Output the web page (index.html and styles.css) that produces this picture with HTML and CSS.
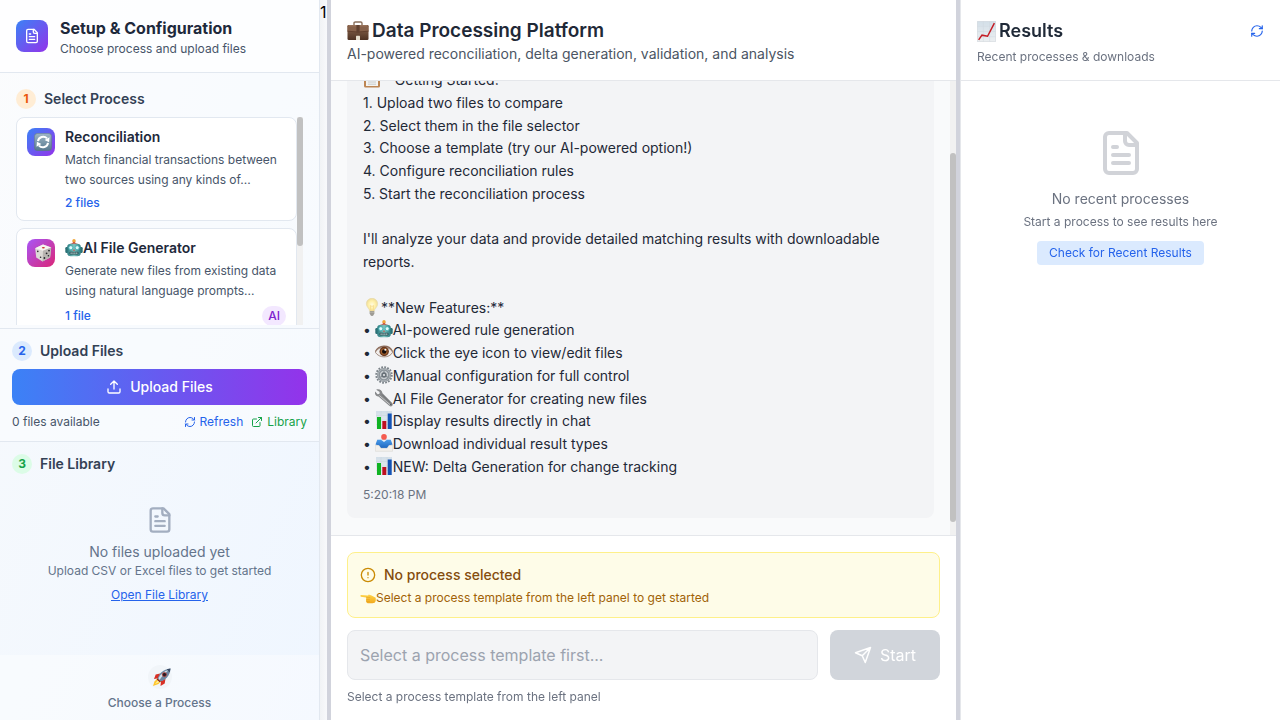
FILE: index.html
```html
<!DOCTYPE html>
<html lang="en">
<head>
<meta charset="utf-8">
<meta name="viewport" content="width=device-width, initial-scale=1">
<title>Data Processing Platform</title>
<link rel="stylesheet" href="styles.css">
</head>
<body>
<svg class="sprite" aria-hidden="true">
  <defs>
    <linearGradient id="g-sync" x1="0" y1="0" x2="0" y2="1"><stop offset="0" stop-color="#9fb6c6"/><stop offset="1" stop-color="#56788f"/></linearGradient>
    <linearGradient id="g-case" x1="0" y1="0" x2="0" y2="1"><stop offset="0" stop-color="#8f6a50"/><stop offset="1" stop-color="#4e3223"/></linearGradient>
    <linearGradient id="g-paper" x1="0" y1="0" x2="0" y2="1"><stop offset="0" stop-color="#d3dfe8"/><stop offset="1" stop-color="#eceff1"/></linearGradient>
    <linearGradient id="g-teal" x1="0" y1="0" x2="1" y2="0"><stop offset="0" stop-color="#2c7b80"/><stop offset=".5" stop-color="#7cc4bf"/><stop offset="1" stop-color="#2c7b80"/></linearGradient>
    <linearGradient id="g-hand" x1="0" y1="0" x2="0" y2="1"><stop offset="0" stop-color="#ffd54a"/><stop offset="1" stop-color="#f2a81d"/></linearGradient>
    <radialGradient id="g-bulb"><stop offset="0" stop-color="#fffbe0"/><stop offset=".6" stop-color="#fff0a8"/><stop offset="1" stop-color="#eddb9a"/></radialGradient>
    <linearGradient id="g-tray" x1="0" y1="0" x2="0" y2="1"><stop offset="0" stop-color="#4a9bea"/><stop offset="1" stop-color="#1d65bd"/></linearGradient>
  </defs>

  <symbol id="file-text" viewBox="0 0 24 24"><path d="M15 2H6a2 2 0 0 0-2 2v16a2 2 0 0 0 2 2h12a2 2 0 0 0 2-2V7Z"/><path d="M14 2v4a2 2 0 0 0 2 2h4"/><path d="M10 9H8M16 13H8M16 17H8"/></symbol>
  <symbol id="upload" viewBox="0 0 24 24"><path d="M21 15v4a2 2 0 0 1-2 2H5a2 2 0 0 1-2-2v-4M17 8l-5-5-5 5M12 3v12"/></symbol>
  <symbol id="refresh" viewBox="0 0 24 24"><path d="M3 12a9 9 0 0 1 9-9 9.75 9.75 0 0 1 6.74 2.74L21 8"/><path d="M21 3v5h-5"/><path d="M21 12a9 9 0 0 1-9 9 9.75 9.75 0 0 1-6.74-2.74L3 16"/><path d="M8 16H3v5"/></symbol>
  <symbol id="external" viewBox="0 0 24 24"><path d="M15 3h6v6M10 14 21 3M18 13v6a2 2 0 0 1-2 2H5a2 2 0 0 1-2-2V8a2 2 0 0 1 2-2h6"/></symbol>
  <symbol id="alert" viewBox="0 0 24 24"><circle cx="12" cy="12" r="10"/><path d="M12 8v4M12 16h.01"/></symbol>
  <symbol id="send" viewBox="0 0 24 24"><path d="m22 2-7 20-4-9-9-4ZM22 2 11 13"/></symbol>

  <symbol id="e-sync" viewBox="0 0 18 18"><rect x=".3" y=".3" width="17.4" height="17.4" rx="3.5" fill="url(#g-sync)" stroke="#5d7788" stroke-width=".6"/><path d="M4 8.2A5.2 5.2 0 0 1 13 5.4M14 9.8A5.2 5.2 0 0 1 5 12.6" fill="none" stroke="#fff" stroke-width="2"/><path d="m15.5 4.2-.4 5-4.5-2.3ZM2.5 13.8l.4-5 4.5 2.3Z" fill="#fff"/></symbol>
  <symbol id="e-dice" viewBox="0 0 18 18"><path d="M1.2 4.2 9 .6l8.2 3-1.1 9.8L8.5 17.6 2.2 13.4Z" fill="#dcd9d6"/><path d="M1.2 4.2 9 .6l8.2 3L9 6.8Z" fill="#f6f4f1"/><path d="m9 6.8 8.2-3.2-1.1 9.8L8.5 17.6Z" fill="#b8b4b1"/><ellipse cx="9.4" cy="3.7" rx="1.5" ry=".8" fill="#c8322d"/><g fill="#27272b"><circle cx="3.8" cy="7.4" r=".8"/><circle cx="6.6" cy="13.3" r=".8"/><circle cx="15" cy="6.6" r=".9"/><circle cx="12.6" cy="9.3" r=".9"/><circle cx="10.4" cy="14" r=".9"/><circle cx="14.4" cy="11.8" r=".8"/></g></symbol>
  <symbol id="e-robot" viewBox="0 0 18 18"><path d="M9 2v3" stroke="#c73b39" stroke-width="2.4"/><circle cx="9" cy="1.8" r="1.7" fill="#f0a63a"/><path d="M5 5.5C6 3.5 12 3.5 13 5.5Z" fill="#c95048"/><rect x=".3" y="8" width="3" height="6" rx="1.2" fill="#2c7075"/><rect x="14.7" y="8" width="3" height="6" rx="1.2" fill="#2c7075"/><path d="M2.2 8Q2.2 4.8 6 4.8h6q3.8 0 3.8 3.2v6q0 3.2-3.5 3.2H5.7q-3.5 0-3.5-3.2Z" fill="url(#g-teal)"/><circle cx="5.8" cy="8.7" r="2" fill="#dffafa" stroke="#3eb1b8" stroke-width=".8"/><circle cx="12.2" cy="8.7" r="2" fill="#dffafa" stroke="#3eb1b8" stroke-width=".8"/><path d="m9 10-1 1.8h2Z" fill="#c94a43"/><rect x="4.5" y="12.8" width="9" height="2.6" rx="1" fill="#24484d"/><path d="M5.5 14.1h7" stroke="#d8f2ef" stroke-width="1.2" stroke-dasharray="1.2 .7"/></symbol>
  <symbol id="e-rocket" viewBox="0 0 18 18"><path d="M4.2 10.5 1.5 13.5 0 18l5.5-2 3-3Z" fill="#ffc52b"/><path d="M5 12 2 16l4.5-2Z" fill="#fff099"/><path d="m7.2 5.5-4.5 1L1 11l4.5-.8ZM12.5 10.8l-.8 4.7L7.5 18l.5-5Z" fill="#d82e24"/><path d="M4.7 10.5C6 5.5 10 1.2 17.5.5 17 8 12.5 12 7.5 13.5Z" fill="#6c87a3"/><path d="M5.5 10C7.5 6 11 3 16 2 12 5 9 8 6.5 12Z" fill="#d4e0ea"/><path d="M13.7 1.3 17.5.5l-.8 4Z" fill="#394a64"/><circle cx="11.4" cy="6.6" r="2.1" fill="#281b26" stroke="#c94338" stroke-width=".7"/><path d="m4.3 10.2 3.7 3.5-1.6.4-2.6-2.7Z" fill="#7f2029"/></symbol>
  <symbol id="e-case" viewBox="0 0 22 20"><path d="M7 4V2.2Q7 1 8.3 1h5.4Q15 1 15 2.2V4" fill="none" stroke="#8a705c" stroke-width="1.4"/><rect x=".5" y="4" width="21" height="15" rx="1.2" fill="url(#g-case)"/><path d="M.5 5.2q0-1.2 1.2-1.2h18.6q1.2 0 1.2 1.2v5q-10.5 1.6-21 0Z" fill="#86614a"/><path d="M.5 10.2q10.5 1.6 21 0" fill="none" stroke="#5a3a29" stroke-width=".8"/><path d="M2 4.8h18" stroke="#a98368" stroke-width=".7"/><path d="M9.4 4h3.2v7.5H9.4Z" fill="#60402f"/><rect x="9" y="14.8" width="4" height="4.2" rx=".5" fill="#e7dfce"/></symbol>
  <symbol id="e-clipboard" viewBox="0 0 18 18"><rect x="1" y="2" width="16" height="15.5" rx="1.5" fill="#bd8654"/><path d="M3 4h12v12H3Z" fill="#f4f4f2"/><path d="M5 7h8M5 9.5h8M5 12h8M5 14.2h8" stroke="#bdc1c5" stroke-width=".8"/><rect x="6" y=".5" width="6" height="4" rx="1" fill="#8e9499"/></symbol>
  <symbol id="e-bulb" viewBox="0 0 18 18"><path d="M9 .3C5.4.3 3.3 2.8 3.3 5.8c0 3.3 3 4.6 3.4 7.5h4.6c.4-2.9 3.4-4.2 3.4-7.5C14.7 2.8 12.6.3 9 .3Z" fill="url(#g-bulb)" stroke="#e4d9ad" stroke-width=".5"/><path d="M8 13 7.3 7.5 9 8.5l1.7-1L10 13" fill="none" stroke="#f3d27c" stroke-width=".6"/><path d="M6.7 13.2h4.6v2.5L10 17.8H8l-1.3-2.1Z" fill="#8d8b84"/><path d="M6.7 14.5h4.6M7 16h4" stroke="#d0cdc5" stroke-width=".5"/></symbol>
  <symbol id="e-eye" viewBox="0 0 18 18"><path d="M.5 9C3.5 2 14 1 17.5 9" fill="none" stroke="#8c6b59" stroke-width="1.8"/><path d="M.3 9.2C4 2.5 14 2.5 17.7 9.2 14.5 15.5 4 15.5.3 9.2Z" fill="#f1eeec" stroke="#9c8478" stroke-width=".9"/><circle cx="9.2" cy="8.5" r="4.7" fill="#6b3a20"/><circle cx="9.2" cy="8.5" r="3.3" fill="#a3622e"/><circle cx="9.2" cy="8.5" r="2.2" fill="#150d0b"/><circle cx="10.3" cy="6.8" r="1" fill="#fff"/></symbol>
  <symbol id="e-gear" viewBox="0 0 18 18"><circle cx="9" cy="9" r="7.8" fill="none" stroke="#7b8389" stroke-width="1.8" stroke-dasharray="1.8 1.265"/><circle cx="9" cy="9" r="5.6" fill="#c9ced1" stroke="#8b9399" stroke-width="2.9"/><circle cx="9" cy="9" r="5.9" fill="none" stroke="#b4babe" stroke-width=".8"/><path d="M9 9V4.5M9 9l4 2.5M9 9l-4 2.5" stroke="#8d959a" stroke-width="1.3"/><circle cx="9" cy="9" r="2.7" fill="#687178"/><circle cx="9" cy="9" r="1.1" fill="#e3e5e7"/></symbol>
  <symbol id="e-wrench" viewBox="0 0 18 18"><path d="M1.2.7 4.7 3.1l-.4 1.8-1.8.3L.2 2.4C-.8 5 .8 7.4 3.5 7.6l10.8 9.2c2.2 1.8 4.6-.7 2.9-2.7L7.5 4.2C7 1.4 4.3-.4 1.2.7Z" fill="#87898b"/><path d="m4.3 6.5 11 9.4" stroke="#c7c8c8" stroke-width="1"/><path d="m7 5.5 9 9" stroke="#626467" stroke-width=".7"/><circle cx="15.8" cy="15.5" r=".8" fill="#55585b"/></symbol>
  <symbol id="e-bars" viewBox="0 0 18 18"><path d="M1 0h16v18H1Z" fill="url(#g-paper)"/><path d="M1 4.5h16M1 9h16M1 13.5h16M6 0v18M12 0v18" stroke="#c5d1da" stroke-width=".4"/><path d="M2 6h4v12H2Z" fill="#10b322"/><path d="M7.3 10h4v8h-4Z" fill="#bd1020"/><path d="M12.7 2.5h4V18h-4Z" fill="#1553b5"/></symbol>
  <symbol id="e-inbox" viewBox="0 0 18 18"><path d="M2 5.5h14l1.8 6v5q0 1-1 1H1.2q-1 0-1-1v-5Z" fill="#e6e7e8"/><path d="M2.3 5.8h13.4l1.8 4.7-3.5 1-1.8 2.8H5.8L4 11.5l-3.5-1Z" fill="url(#g-tray)"/><path d="M.3 11.5H4l1.8 2.8h6.4l1.8-2.8h3.7v5.7H.3Z" fill="#f2f0ed" stroke="#d7d4d0" stroke-width=".5"/><path d="M6 5.8h6L9 8Z" fill="#e9f0f7"/><circle cx="9" cy="2.9" r="2.8" fill="#f45b50"/></symbol>
  <symbol id="e-hand" viewBox="0 0 18 18"><path d="M.8 5.5Q0 7 1 7.5l6 .8-.2 3.7Q7 15 10 15h4q3 0 3.7-2.5V8.7L13 6.2 9.8 5 9 6.2Z" fill="url(#g-hand)"/><path d="M7 8.3h4.5M7 10.6h4M7.2 12.8H11" stroke="#dd9a22" stroke-width=".6"/></symbol>
  <symbol id="e-chart" viewBox="0 0 18 20"><path d="M.3.3h17.4v19.4H.3Z" fill="url(#g-paper)" stroke="#c5ced5" stroke-width=".5"/><path d="M.5 5h17M.5 10h17M.5 15h17M6 .5v19M12 .5v19" stroke="#ccd6de" stroke-width=".4"/><path d="m1.5 18 3.2-4.5 5.3 1L16.5 2" fill="none" stroke="#c51c24" stroke-width="1.4"/></symbol>
</svg>

<div class="app">
  <aside class="setup">
    <header class="setup-head">
      <span class="logo"><svg class="icon i16"><use href="#file-text"/></svg></span>
      <div>
        <h1 class="setup-title">Setup &amp; Configuration</h1>
        <p class="setup-sub">Choose process and upload files</p>
      </div>
    </header>

    <section class="step step-process">
      <h2 class="step-title"><span class="num orange">1</span>Select Process</h2>
      <div class="process-area">
        <div class="process-list">
          <button class="card" type="button">
            <span class="tile blue"><svg class="emoji"><use href="#e-sync"/></svg></span>
            <span class="card-body">
              <span class="card-title">Reconciliation</span>
              <span class="card-desc">Match financial transactions between two sources using any kinds of...</span>
              <span class="card-meta">2 files</span>
            </span>
          </button>
          <button class="card" type="button">
            <span class="tile pink"><svg class="emoji"><use href="#e-dice"/></svg></span>
            <span class="card-body">
              <span class="card-title"><svg class="emoji"><use href="#e-robot"/></svg>AI File Generator</span>
              <span class="card-desc">Generate new files from existing data using natural language prompts...</span>
              <span class="card-meta tagged">1 file <span class="tag">AI</span></span>
            </span>
          </button>
        </div>
        <div class="track process-track"><span class="thumb"></span></div>
      </div>
    </section>

    <section class="step step-upload">
      <h2 class="step-title"><span class="num sky">2</span>Upload Files</h2>
      <button class="upload" type="button"><svg class="icon i16"><use href="#upload"/></svg>Upload Files</button>
      <div class="upload-row">
        <span>0 files available</span>
        <span class="upload-links">
          <button class="mini blue-text" type="button"><svg class="icon i12"><use href="#refresh"/></svg>Refresh</button>
          <button class="mini green-text" type="button"><svg class="icon i12"><use href="#external"/></svg>Library</button>
        </span>
      </div>
    </section>

    <section class="step step-library">
      <h2 class="step-title"><span class="num green">3</span>File Library</h2>
      <div class="empty">
        <svg class="icon i28 muted"><use href="#file-text"/></svg>
        <p class="empty-title">No files uploaded yet</p>
        <p class="empty-sub">Upload CSV or Excel files to get started</p>
        <button class="mini underline blue-text" type="button">Open File Library</button>
      </div>
    </section>

    <footer class="setup-foot">
      <span class="rocket"><svg class="emoji"><use href="#e-rocket"/></svg></span>
      <p>Choose a Process</p>
    </footer>
  </aside>
  <span class="stray">1</span>
  <div class="divider"></div>

  <main class="chat">
    <header class="chat-head">
      <h1 class="chat-title"><svg class="emoji case"><use href="#e-case"/></svg>Data Processing Platform</h1>
      <p class="chat-sub">AI-powered reconciliation, delta generation, validation, and analysis</p>
    </header>
    <div class="chat-body">
      <div class="messages" id="messages">
        <article class="bubble">
          <p class="line"><svg class="emoji"><use href="#e-clipboard"/></svg>**Getting Started:**</p>
          <p class="line">1. Upload two files to compare</p>
          <p class="line">2. Select them in the file selector</p>
          <p class="line">3. Choose a template (try our AI-powered option!)</p>
          <p class="line">4. Configure reconciliation rules</p>
          <p class="line">5. Start the reconciliation process</p>
          <br>
          <p class="line">I'll analyze your data and provide detailed matching results with downloadable reports.</p>
          <br>
          <p class="line"><svg class="emoji"><use href="#e-bulb"/></svg>**New Features:**</p>
          <p class="line">• <svg class="emoji"><use href="#e-robot"/></svg>AI-powered rule generation</p>
          <p class="line">• <svg class="emoji"><use href="#e-eye"/></svg>Click the eye icon to view/edit files</p>
          <p class="line">• <svg class="emoji"><use href="#e-gear"/></svg>Manual configuration for full control</p>
          <p class="line">• <svg class="emoji"><use href="#e-wrench"/></svg>AI File Generator for creating new files</p>
          <p class="line">• <svg class="emoji"><use href="#e-bars"/></svg>Display results directly in chat</p>
          <p class="line">• <svg class="emoji"><use href="#e-inbox"/></svg>Download individual result types</p>
          <p class="line">• <svg class="emoji"><use href="#e-bars"/></svg>NEW: Delta Generation for change tracking</p>
          <time class="stamp">5:20:18 PM</time>
        </article>
      </div>
      <div class="track chat-track"><span class="thumb"></span></div>
    </div>
    <form class="composer">
      <div class="alert" role="status">
        <p class="alert-title"><svg class="icon i16 amber"><use href="#alert"/></svg>No process selected</p>
        <p class="alert-text"><svg class="emoji small"><use href="#e-hand"/></svg>Select a process template from the left panel to get started</p>
      </div>
      <div class="entry">
        <input class="field" type="text" id="prompt" aria-label="Message" aria-describedby="hint" placeholder="Select a process template first..." disabled>
        <button class="start" type="submit" disabled><svg class="icon i18"><use href="#send"/></svg>Start</button>
      </div>
      <p class="hint" id="hint">Select a process template from the left panel</p>
    </form>
  </main>
  <div class="divider"></div>

  <aside class="results">
    <header class="results-head">
      <div class="results-bar">
        <h2 class="results-title"><svg class="emoji chart"><use href="#e-chart"/></svg>Results</h2>
        <button class="mini blue-text" type="button" aria-label="Refresh results"><svg class="icon i14"><use href="#refresh"/></svg></button>
      </div>
      <p class="results-sub">Recent processes &amp; downloads</p>
    </header>
    <div class="results-empty">
      <svg class="icon i48 pale"><use href="#file-text"/></svg>
      <p class="results-none">No recent processes</p>
      <p class="results-note">Start a process to see results here</p>
      <button class="check" type="button">Check for Recent Results</button>
    </div>
  </aside>
</div>
<script src="app.js"></script>
</body>
</html>
```

FILE: app.js
```js
// Keep the latest message in view, leaving the list's bottom spacing below the fold.
const messages = document.getElementById('messages');
messages.scrollTop = messages.scrollHeight - messages.clientHeight - 16;
```

FILE: styles.css
```css
* { box-sizing: border-box; margin: 0; padding: 0; }
body { font-family: Inter, "Liberation Sans", sans-serif; font-size: 16px; line-height: 24px; color: #000; }
button, input { font: inherit; color: inherit; border: 0; background: none; }
button { cursor: pointer; }
.sprite { position: absolute; width: 0; height: 0; }

.icon { flex: none; display: block; fill: none; stroke: currentColor; stroke-width: 2; stroke-linecap: round; stroke-linejoin: round; }
.i12 { width: 12px; height: 12px; }
.i14 { width: 14px; height: 14px; }
.i16 { width: 16px; height: 16px; }
.i18 { width: 18px; height: 18px; }
.i28 { width: 28px; height: 28px; }
.i48 { width: 48px; height: 48px; }
.emoji { flex: none; width: 18px; height: 18px; vertical-align: -3px; }
.emoji.small { width: 16px; height: 16px; }
.emoji.case { width: 22px; height: 20px; margin-right: 3px; }
.emoji.chart { width: 19px; height: 21px; margin-right: 3px; }
.muted { color: #a3aec0; }
.pale { color: #d1d3d8; }
.amber { color: #ca8a04; }
.blue-text { color: #2563eb; }
.green-text { color: #16a34a; }

.app { display: flex; height: 100vh; overflow: hidden; background: #f9fafb; }
.divider { flex: none; width: 4px; background: #d1d3dc; cursor: col-resize; }
.stray { flex: none; width: 7px; background: linear-gradient(to right, #f1f3f5, #f8f9fb); }

/* Slim scroll bars beside the scrolling lists */
.track { flex: none; display: flex; flex-direction: column; width: 6px; background: #f1f1f1; }
.thumb { border-radius: 3px; background: #c1c1c1; }
.process-track .thumb { flex: 0 0 62%; }
.chat-track::before { content: ""; flex: 72; }
.chat-track .thumb { flex: 369; }
.chat-track::after { content: ""; flex: 13; }

/* Setup panel */
.setup { flex: none; width: 320px; display: flex; flex-direction: column; border-right: 1px solid #e2e8f0; background: linear-gradient(to bottom right, #f8fafc, #eff6ff); }
.setup-head { display: flex; align-items: flex-start; gap: 12px; padding: 16px 16px 14px; border-bottom: 1px solid #e2e8f0; background: rgba(255, 255, 255, .8); }
.logo { display: grid; place-items: center; width: 32px; height: 32px; margin-top: 4px; border-radius: 8px; color: #fff; background: linear-gradient(to bottom right, #3b82f6, #9333ea); }
.setup-title { font-size: 16px; line-height: 24px; font-weight: 700; color: #1e293b; }
.setup-sub { font-size: 12px; line-height: 18px; color: #475569; }

.step { border-bottom: 1px solid #e2e8f0; }
.step-process { padding: 16px 16px 3px; background: rgba(255, 255, 255, .4); }
.step-upload { padding: 12px 12px 10px; background: rgba(255, 255, 255, .4); }
.step-library { flex: 1; padding: 12px; border-bottom: 0; }
.step-title { display: flex; align-items: center; gap: 8px; margin-bottom: 8px; font-size: 14px; line-height: 20px; font-weight: 600; color: #334155; }
.num { display: grid; place-items: center; width: 20px; height: 20px; border-radius: 50%; font-size: 12px; font-weight: 700; }
.orange { background: #ffedd5; color: #ea580c; }
.sky { background: #dbeafe; color: #2563eb; }
.green { background: #dcfce7; color: #16a34a; }

.process-area { display: flex; height: 208px; }
.process-list { flex: 1; min-width: 0; display: flex; flex-direction: column; gap: 7px; overflow-y: auto; scrollbar-width: none; }
.card { flex: none; display: flex; align-items: flex-start; gap: 10px; width: 100%; padding: 10px 10px 9px; text-align: left; border: 1px solid #e2e8f0; border-radius: 8px; background: rgba(255, 255, 255, .9); }
.tile { flex: none; display: grid; place-items: center; width: 28px; height: 28px; padding-left: 3px; border-radius: 8px; }
.tile.blue { background: linear-gradient(to bottom right, #3b82f6, #9333ea); }
.tile.pink { background: linear-gradient(to bottom right, #a855f7, #db2777); }
.card-body { flex: 1; min-width: 0; display: flex; flex-direction: column; }
.card-title { display: flex; align-items: center; height: 18px; margin-bottom: 4px; font-size: 14px; line-height: 18px; font-weight: 600; color: #1e293b; }
.card-desc { margin-bottom: 6px; font-size: 12px; line-height: 1.625; color: #475569; }
.card-meta { display: flex; align-items: center; justify-content: space-between; height: 16px; font-size: 12px; line-height: 16px; font-weight: 500; color: #2563eb; }
.tagged { height: 20px; }
.tag { padding: 2px 6px; border-radius: 10px; background: #f3e8ff; color: #7e22ce; }

.upload { display: flex; align-items: center; justify-content: center; gap: 8px; width: 100%; height: 36px; border-radius: 8px; font-size: 14px; line-height: 20px; font-weight: 500; color: #fff; background: linear-gradient(to right, #3b82f6, #9333ea); }
.upload-row { display: flex; justify-content: space-between; margin-top: 8px; font-size: 12px; line-height: 18px; color: #475569; }
.upload-links { display: flex; gap: 8px; }
.mini { display: flex; align-items: center; gap: 4px; font-size: 12px; line-height: 18px; }
.underline { text-decoration: underline; }

.empty { display: flex; flex-direction: column; align-items: center; padding: 24px 0; color: #64748b; }
.empty-title { margin-top: 8px; font-size: 14px; line-height: 20px; }
.empty-sub { margin-bottom: 6px; font-size: 12px; line-height: 18px; }
.setup-foot { display: flex; flex-direction: column; align-items: center; gap: 6px; padding: 10px 12px 9px; font-size: 12px; line-height: 16px; font-weight: 500; color: #64748b; background: rgba(255, 255, 255, .4); }
.rocket { display: grid; place-items: center; width: 24px; height: 24px; padding-left: 4px; border-radius: 50%; background: #f1f5f9; }

/* Chat */
.chat { flex: 1; min-width: 0; display: flex; flex-direction: column; }
.chat-head { padding: 17px 16px; border-bottom: 1px solid #e5e7eb; background: #fff; }
.chat-title { display: flex; align-items: center; font-size: 19px; line-height: 28px; font-weight: 600; color: #1f2937; }
.chat-sub { font-size: 14px; line-height: 18px; color: #4b5563; }
.chat-body { flex: 1; min-height: 0; display: flex; }
.messages { flex: 1; min-width: 0; padding: 16px 16px 33px; overflow-y: auto; scrollbar-width: none; background: #f9fafb; }
.bubble { padding: 62px 16px 15px; border-radius: 8px; background: #f3f4f6; font-size: 14px; line-height: 1.625; color: #1f2937; }
.stamp { display: block; margin-top: 8px; font-size: 12px; line-height: 16px; color: #6b7280; }

.composer { padding: 16px 16px 14px; border-top: 1px solid #e5e7eb; background: #fff; }
.alert { padding: 12px 12px 10px; border: 1px solid #fef08a; border-radius: 8px; background: #fefce8; }
.alert-title { display: flex; align-items: center; gap: 8px; margin-bottom: 4px; font-size: 14px; line-height: 20px; font-weight: 500; color: #854d0e; }
.alert-text { display: flex; align-items: center; font-size: 12px; line-height: 18px; color: #a16207; }
.entry { display: flex; gap: 12px; margin: 12px 0 8px; }
.field { flex: 1; min-width: 0; height: 50px; padding: 12px; border: 1px solid #e5e7eb; border-radius: 8px; background: #f3f4f6; }
.field::placeholder { color: #9ca3af; opacity: 1; }
.start { display: flex; align-items: center; gap: 8px; padding: 0 24px; border-radius: 8px; background: #d1d5db; color: #fff; }
.hint { font-size: 12px; line-height: 18px; color: #6b7280; }

/* Results */
.results { flex: none; width: 320px; border-left: 1px solid #e5e7eb; background: #fff; }
.results-head { padding: 17px 16px 14px; border-bottom: 1px solid #e5e7eb; }
.results-bar { display: flex; align-items: center; justify-content: space-between; }
.results-title { display: flex; align-items: center; font-size: 18px; line-height: 28px; font-weight: 600; color: #1f2937; }
.results-sub { margin-top: 3px; font-size: 12px; line-height: 18px; color: #6b7280; }
.results-empty { display: flex; flex-direction: column; align-items: center; padding: 48px 16px; color: #6b7280; }
.results-none { margin-top: 12px; font-size: 14px; line-height: 20px; }
.results-note { margin: 4px 0 10px; font-size: 12px; line-height: 18px; }
.check { padding: 4px 12px; border-radius: 4px; font-size: 12px; line-height: 16px; color: #2563eb; background: #dbeafe; }
```
